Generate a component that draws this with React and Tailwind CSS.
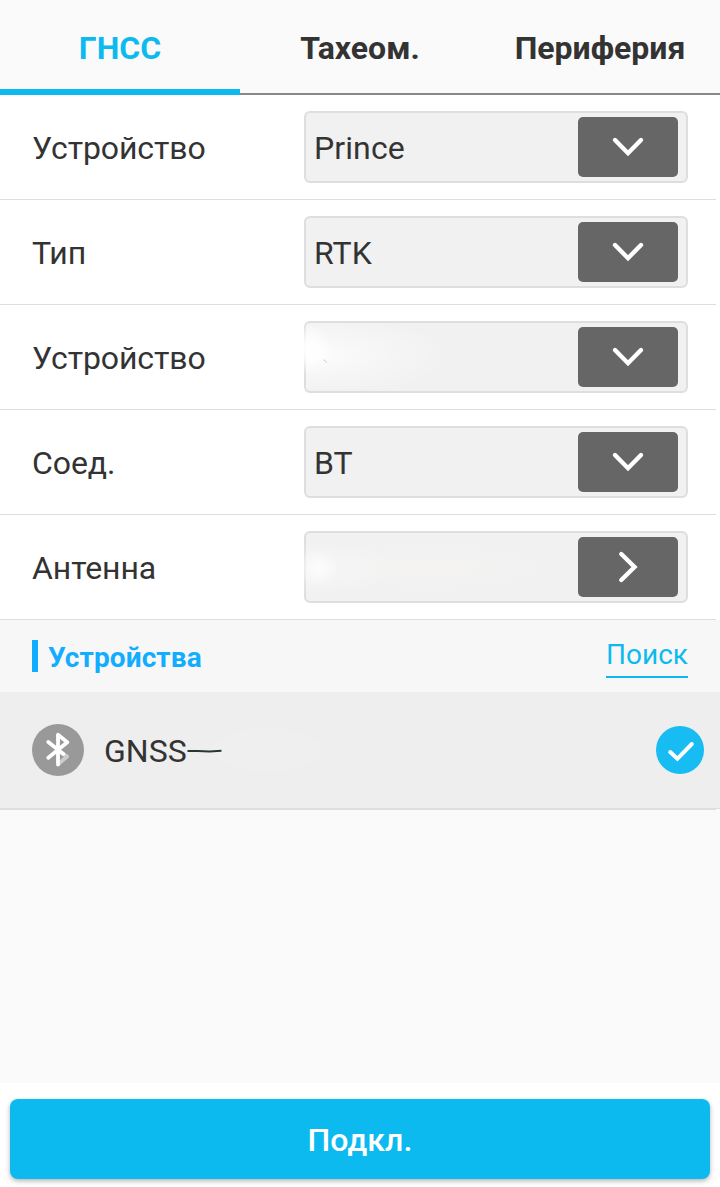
import { useState } from 'react'

const TABS = ['ГНСС', 'Тахеом.', 'Периферия']

const FIELDS = [
  { label: 'Устройство', value: 'Prince', icon: 'down' },
  { label: 'Тип', value: 'RTK', icon: 'down' },
  { label: 'Устройство', value: '', icon: 'down', smudge: 'model' },
  { label: 'Соед.', value: 'BT', icon: 'down' },
  { label: 'Антенна', value: '', icon: 'right', smudge: 'antenna' },
]

function Chevron({ dir }) {
  return (
    <svg width="100" height="60" viewBox="0 0 100 60" fill="none" stroke="#fff" strokeWidth="4.4" strokeLinecap="round">
      <path d={dir === 'down' ? 'M37 23l13 13.2L63 23' : 'M43.3 17l13.2 13-13.2 13'} />
    </svg>
  )
}

function Smudge({ kind }) {
  if (kind === 'model') {
    return (
      <>
        <div className="absolute -left-4 top-0 h-[60px] w-[40px] bg-[radial-gradient(ellipse_24px_26px_at_18px_26px,#fff,#ffffffc0_40%,transparent)]" />
        <div className="absolute left-0 top-0 h-[66px] w-[160px] bg-[radial-gradient(ellipse_140px_42px_at_4px_32px,#ffffffe0,#ffffff70_40%,transparent)]" />
        <svg className="absolute left-4 top-[35px]" width="8" height="6" viewBox="0 0 8 6" fill="none" stroke="#d0d0d0">
          <path d="M1 1.5l4 3" />
        </svg>
      </>
    )
  }
  return (
    <>
      <div className="absolute left-0 top-2 h-[52px] w-[250px] bg-[radial-gradient(ellipse_closest-side,#f4f3f2,transparent)]" />
      <div className="absolute -left-0.5 top-1 h-[60px] w-[100px] bg-[radial-gradient(ellipse_80px_28px_at_14px_31px,#ffffff60,transparent)]" />
      <div className="absolute -left-0.5 top-1 h-[60px] w-[56px] bg-[radial-gradient(circle_20px_at_14px_31px,#ffffffb0,transparent)]" />
    </>
  )
}

function Field({ label, value, icon, smudge }) {
  return (
    <div className="h-[105px] bg-white">
      <div className="flex h-[104px] items-center px-8">
        <span className="w-[272px] pt-0.5 text-[32px] leading-10 tracking-[-0.1px]">{label}</span>
        <div className="relative flex h-[72px] flex-1 items-center justify-between rounded-md border-2 border-[#dedede] bg-[#f1f1f1] px-2">
          {smudge && <Smudge kind={smudge} />}
          <span className="pt-0.5 text-[32px] leading-10 tracking-[0.1px]">{value}</span>
          <button className="h-[60px] w-[100px] rounded-[5px] bg-[#666]">
            <Chevron dir={icon} />
          </button>
        </div>
      </div>
      <div className="h-px w-[716px] bg-[#dedede]" />
    </div>
  )
}

function BluetoothIcon() {
  return (
    <svg width="52" height="52" viewBox="0 0 52 52" fill="none" strokeWidth="3.8" strokeLinecap="round" strokeLinejoin="round">
      <circle cx="26" cy="26" r="26" fill="#999" />
      <path d="M27 39.5l8-7" stroke="#ccc" />
      <path d="M26 26l9 6.5" stroke="#ccc" />
      <path d="M16.3 18l15 12M16.3 33.8l19-15.6-9.3-7.4v29.8" stroke="#fff" />
    </svg>
  )
}

export default function App() {
  const [tab, setTab] = useState(0)

  return (
    <div className="flex h-[1187px] w-[720px] flex-col bg-[#fafafa] font-['Roboto','Noto_Sans',sans-serif] text-[#333]">
      <div className="grid h-[95px] grid-cols-3">
        {TABS.map((t, i) => (
          <button key={t} onClick={() => setTab(i)} className={`flex flex-col text-[32px] font-bold leading-[38px] ${i === tab ? 'text-[#0dbaf0]' : 'text-[#333]'}`}>
            <span className="w-full flex-1 pt-[29px] text-center">{t}</span>
            <span className={`w-full ${i === tab ? 'h-1.5 bg-[#0dbaf0]' : 'h-0.5 bg-[#888]'}`} />
          </button>
        ))}
      </div>

      {FIELDS.map((f, i) => <Field key={i} {...f} />)}

      <div className="flex h-[72px] justify-between bg-[#f7f7f7] px-8 pt-5">
        <div className="flex h-8 items-center gap-[10px]">
          <span className="h-8 w-1.5 bg-[#12adff]" />
          <h2 className="pt-[3px] text-[28px] font-bold leading-8 tracking-[0.1px] text-[#12adff]">Устройства</h2>
        </div>
        <button className="-mt-1 h-[42px] border-b-2 border-[#0dbaf0] pb-0.5 text-[28px] leading-[38px] text-[#0dbaf0]">Поиск</button>
      </div>

      <div className="h-[118px] bg-[#eee]">
        <div className="flex h-[116px] items-center pl-8 pr-4">
          <BluetoothIcon />
          <span className="ml-5 pt-0.5 text-[32px] leading-10">GNSS</span>
          <svg width="140" height="50" viewBox="0 0 140 50">
            <ellipse cx="80" cy="25" rx="54" ry="22" fill="#efefef" />
            <path d="M.5 26h10l12 .4 12-.6" fill="none" stroke="#26382f" strokeWidth="2" />
          </svg>
          <svg className="ml-auto" width="48" height="48" viewBox="0 0 48 48" fill="none">
            <circle cx="24" cy="24" r="24" fill="#16bcf2" />
            <path d="M14.2 26l7.2 6.8L35.8 18" stroke="#fff" strokeWidth="4" strokeLinecap="round" />
          </svg>
        </div>
        <div className="h-px bg-[#dedede]" />
        <div className="flex h-px bg-[#fafafa]">
          <span className="w-[716px] bg-[#dedede]" />
        </div>
      </div>

      <div className="mt-auto h-[104px] bg-white px-[10px] pt-4">
        <button className="h-20 w-full rounded-lg bg-[#0dbaf0] pt-0.5 text-[32px] font-medium leading-10 tracking-[0.1px] text-white shadow-[0_2px_5px_#0000004d]">Подкл.</button>
      </div>
    </div>
  )
}
